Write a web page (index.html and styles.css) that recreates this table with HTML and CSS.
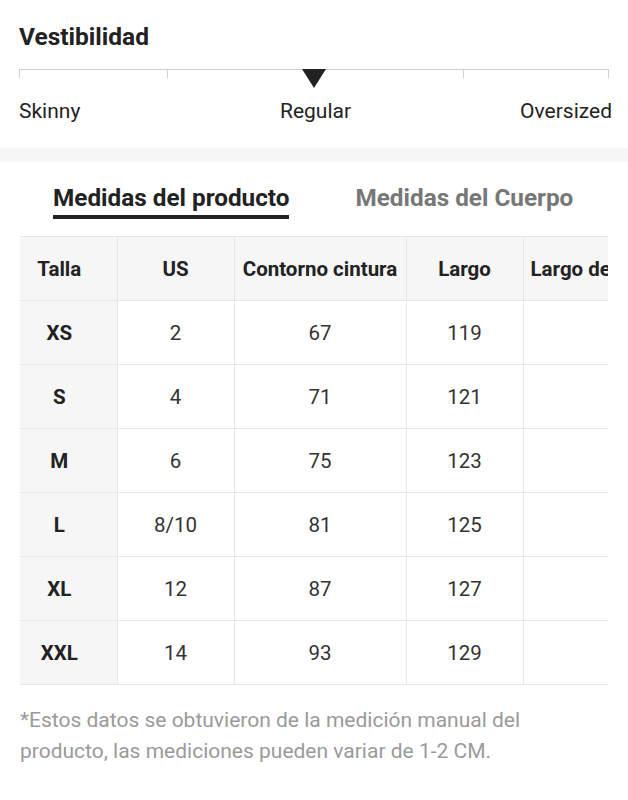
FILE: index.html
```html
<!DOCTYPE html>
<html lang="es">
<head>
<meta charset="utf-8">
<title>Medidas</title>
<link rel="stylesheet" href="styles.css">
</head>
<body>
<section class="fit">
  <h2 class="fit-title">Vestibilidad</h2>
  <div class="scale">
    <div class="seg seg-a"></div>
    <div class="seg seg-b"></div>
    <div class="seg seg-c"></div>
    <span class="marker"></span>
  </div>
  <div class="scale-labels">
    <span class="lbl-left">Skinny</span>
    <span class="lbl-mid">Regular</span>
    <span class="lbl-right">Oversized</span>
  </div>
</section>
<div class="band"></div>
<section class="sizes">
  <div class="tabs">
    <span class="tab active">Medidas del producto</span>
    <span class="tab">Medidas del Cuerpo</span>
  </div>
  <div class="table-wrap">
    <table class="size-table">
      <colgroup>
        <col class="c1"><col class="c2"><col class="c3"><col class="c4"><col class="c5">
      </colgroup>
      <thead>
        <tr><th>Talla</th><th>US</th><th>Contorno cintura</th><th>Largo</th><th class="left">Largo de entrepierna</th></tr>
      </thead>
      <tbody>
        <tr><th>XS</th><td>2</td><td>67</td><td>119</td><td></td></tr>
        <tr><th>S</th><td>4</td><td>71</td><td>121</td><td></td></tr>
        <tr><th>M</th><td>6</td><td>75</td><td>123</td><td></td></tr>
        <tr><th>L</th><td>8/10</td><td>81</td><td>125</td><td></td></tr>
        <tr><th>XL</th><td>12</td><td>87</td><td>127</td><td></td></tr>
        <tr><th>XXL</th><td>14</td><td>93</td><td>129</td><td></td></tr>
      </tbody>
    </table>
  </div>
  <p class="note">*Estos datos se obtuvieron de la medición manual del producto, las mediciones pueden variar de 1-2 CM.</p>
</section>
</body>
</html>
```

FILE: styles.css
```css
* { box-sizing: border-box; }
html, body { margin: 0; padding: 0; background: #fff; }
body {
  font-family: Roboto, "Liberation Sans", Arial, sans-serif;
  color: #222;
  width: 628px;
}
.fit {
  padding: 20px 20px 0 19px;
  height: 148px;
}
.fit-title {
  margin: 0;
  font-size: 24.5px;
  font-weight: 700;
  line-height: 34px;
  color: #222;
}
.scale {
  position: relative;
  margin-top: 15px;
  display: grid;
  grid-template-columns: 148fr 295fr 146fr;
  width: 590px;
}
.seg {
  height: 9px;
  border-top: 1px solid #cfcfcf;
  border-left: 1px solid #cfcfcf;
}
.seg-c { border-right: 1px solid #cfcfcf; }
.marker {
  position: absolute;
  left: 283px;
  top: 0;
  width: 0;
  height: 0;
  border-left: 12px solid transparent;
  border-right: 12px solid transparent;
  border-top: 19px solid #222;
}
.scale-labels {
  display: grid;
  grid-template-columns: 1fr auto 1fr;
  width: 593px;
  margin-top: 20px;
  font-size: 21px;
  line-height: 26px;
  color: #222;
}
.lbl-left { justify-self: start; }
.lbl-mid { justify-self: center; }
.lbl-right { justify-self: end; }
.band {
  height: 14px;
  background: #f6f6f6;
}
.tabs {
  display: flex;
  gap: 66px;
  padding: 19px 0 0 53px;
  height: 74px;
}
.tab {
  font-size: 24.3px;
  font-weight: 700;
  line-height: 34px;
  color: #777;
  height: 38px;
}
.tab.active {
  color: #222;
  border-bottom: 4px solid #222;
}
.table-wrap {
  margin-left: 20px;
  width: 588px;
  overflow: hidden;
}
.size-table {
  border-collapse: collapse;
  table-layout: fixed;
  width: 723px;
  font-size: 20.5px;
}
.c1 { width: 97px; }
.c2 { width: 117px; }
.c3 { width: 172px; }
.c4 { width: 117px; }
.c5 { width: 220px; }
.size-table th, .size-table td {
  height: 64px;
  padding: 0 6px;
  text-align: center;
  white-space: nowrap;
  overflow: hidden;
  border: 1px solid #e6e6e6;
}
.size-table tr > :first-child {
  border-left: 0;
  padding: 0 18px 0 0;
}
.size-table th {
  font-weight: 700;
  color: #222;
  background: #f6f6f6;
}
.size-table td {
  font-weight: 400;
  color: #333;
  background: #fff;
}
.size-table th.left { text-align: left; padding-left: 7px; }
.note {
  margin: 20px 0 0 20px;
  width: 560px;
  font-size: 21px;
  line-height: 31px;
  color: #9a9a9a;
}
```
